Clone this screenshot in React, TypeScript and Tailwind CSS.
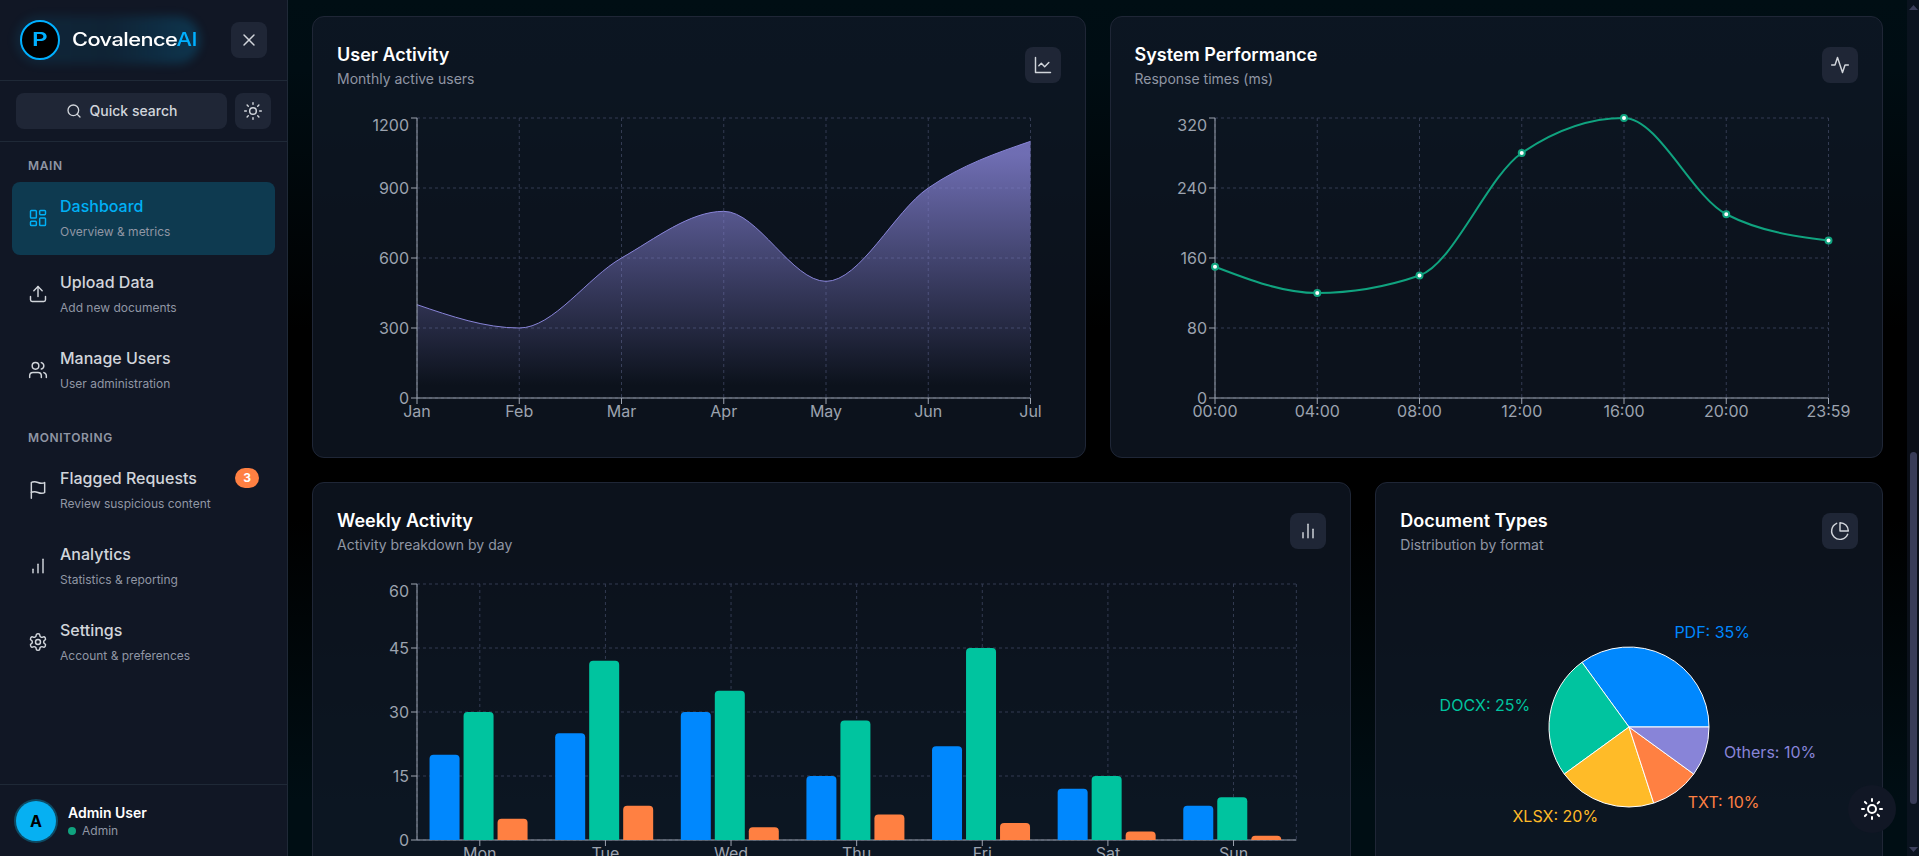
import React from "react";
import { LayoutDashboard, Search, Sun, Upload, Users, X } from "lucide-react";

const COLORS = {
  blue: "#0088fe",
  green: "#00c49f",
  yellow: "#ffbb28",
  orange: "#ff8042",
  purple: "#8884d8",
};

const activityData = [
  { name: "Jan", value: 400 },
  { name: "Feb", value: 300 },
  { name: "Mar", value: 600 },
  { name: "Apr", value: 800 },
  { name: "May", value: 500 },
  { name: "Jun", value: 900 },
  { name: "Jul", value: 1100 },
];

const performanceData = [
  { name: "00:00", value: 150 },
  { name: "04:00", value: 120 },
  { name: "08:00", value: 140 },
  { name: "12:00", value: 280 },
  { name: "16:00", value: 320 },
  { name: "20:00", value: 210 },
  { name: "23:59", value: 180 },
];

const weeklyData = [
  { name: "Mon", values: [20, 30, 5] },
  { name: "Tue", values: [25, 42, 8] },
  { name: "Wed", values: [30, 35, 3] },
  { name: "Thu", values: [15, 28, 6] },
  { name: "Fri", values: [22, 45, 4] },
  { name: "Sat", values: [12, 15, 2] },
  { name: "Sun", values: [8, 10, 1] },
];

const documentTypes = [
  { name: "PDF", value: 35, color: COLORS.blue },
  { name: "DOCX", value: 25, color: COLORS.green },
  { name: "XLSX", value: 20, color: COLORS.yellow },
  { name: "TXT", value: 10, color: COLORS.orange },
  { name: "Others", value: 10, color: COLORS.purple },
];

type Point = { x: number; y: number };

// Chart area margins: y axis takes 60px plus a 20px margin
const LEFT = 80;
const TOP = 5;
const RIGHT = 30;

/* ---------- icons ---------- */

const Icon = ({
  children,
  size = 20,
}: {
  children: React.ReactNode;
  size?: number;
}) => (
  <svg
    width={size}
    height={size}
    viewBox="0 0 24 24"
    fill="none"
    stroke="currentColor"
    strokeWidth={1.75}
    strokeLinecap="round"
    strokeLinejoin="round"
  >
    {children}
  </svg>
);

const FlagIcon = () => (
  <Icon>
    <path d="M4 15s1-1 4-1 5 2 8 2 4-1 4-1V3s-1 1-4 1-5-2-8-2-4 1-4 1z" />
    <path d="M4 22v-7" />
  </Icon>
);

const BarsIcon = () => (
  <Icon>
    <path d="M12 20V10" />
    <path d="M18 20V4" />
    <path d="M6 20v-4" />
  </Icon>
);

const SettingsIcon = () => (
  <Icon>
    <path d="M12.22 2h-.44a2 2 0 0 0-2 2v.18a2 2 0 0 1-1 1.73l-.43.25a2 2 0 0 1-2 0l-.15-.08a2 2 0 0 0-2.73.73l-.22.38a2 2 0 0 0 .73 2.73l.15.1a2 2 0 0 1 1 1.72v.51a2 2 0 0 1-1 1.74l-.15.09a2 2 0 0 0-.73 2.73l.22.38a2 2 0 0 0 2.73.73l.15-.08a2 2 0 0 1 2 0l.43.25a2 2 0 0 1 1 1.73V20a2 2 0 0 0 2 2h.44a2 2 0 0 0 2-2v-.18a2 2 0 0 1 1-1.73l.43-.25a2 2 0 0 1 2 0l.15.08a2 2 0 0 0 2.73-.73l.22-.39a2 2 0 0 0-.73-2.73l-.15-.08a2 2 0 0 1-1-1.74v-.5a2 2 0 0 1 1-1.74l.15-.09a2 2 0 0 0 .73-2.73l-.22-.38a2 2 0 0 0-2.73-.73l-.15.08a2 2 0 0 1-2 0l-.43-.25a2 2 0 0 1-1-1.73V4a2 2 0 0 0-2-2z" />
    <circle cx="12" cy="12" r="3" />
  </Icon>
);

const LineChartIcon = () => (
  <Icon>
    <path d="M3 3v18h18" />
    <path d="m19 9-5 5-4-4-3 3" />
  </Icon>
);

const ActivityIcon = () => (
  <Icon>
    <path d="M22 12h-4l-3 9L9 3l-3 9H2" />
  </Icon>
);

const BarChartIcon = () => (
  <Icon>
    <path d="M18 20V10" />
    <path d="M12 20V4" />
    <path d="M6 20v-6" />
  </Icon>
);

const PieChartIcon = () => (
  <Icon>
    <path d="M21.21 15.89A10 10 0 1 1 8 2.83" />
    <path d="M22 12A10 10 0 0 0 12 2v10z" />
  </Icon>
);

/* ---------- sidebar ---------- */

type NavItemProps = {
  icon: React.ReactNode;
  title: string;
  description: string;
  active?: boolean;
  badge?: number;
};

const NavItem = ({ icon, title, description, active, badge }: NavItemProps) => {
  return (
    <a
      className={
        active
          ? "-mb-px flex h-[73px] items-center gap-3 rounded-lg bg-[#0e3a50] px-4 pb-px text-[#00b0f5]"
          : "flex h-[72px] items-center gap-3 rounded-lg px-4 text-[#d1d5db]"
      }
    >
      {icon}
      <div className="flex-1">
        <div className="flex items-center justify-between">
          <span className="text-base leading-6 font-medium">{title}</span>
          {badge && (
            <span className="flex h-5 w-6 items-center justify-center rounded-full bg-[#ff8042] text-xs font-bold text-white">
              {badge}
            </span>
          )}
        </div>
        <p className="mt-1 text-xs leading-5 text-[#9096a4]">{description}</p>
      </div>
    </a>
  );
};

const NavSection = ({
  label,
  children,
}: {
  label: string;
  children: React.ReactNode;
}) => (
  <div>
    <h3 className="mb-2 px-4 text-xs leading-4 font-semibold tracking-wider text-[#9096a4] uppercase">
      {label}
    </h3>
    <div className="flex flex-col gap-1">{children}</div>
  </div>
);

const Sidebar = () => {
  return (
    <aside className="flex h-[857px] w-72 shrink-0 flex-col border-r border-[#1f2937] bg-[#111725]">
      <div className="flex h-[81px] items-center justify-between border-b border-[#1f2937] px-5">
        <div className="relative flex items-center gap-3">
          <div className="absolute -inset-x-1 -inset-y-1 rounded-full bg-linear-to-r from-[#00b0f5]/10 via-[#00b0f5]/8 to-[#00b0f5]/20 blur-[5px]" />
          <div className="relative flex size-10 items-center justify-center rounded-full border-2 border-[#00b0ff] bg-black">
            <span className="scale-x-[1.35] text-lg font-semibold text-[#00b0ff]">
              P
            </span>
          </div>
          <div className="relative w-[124px]">
            <span className="inline-block origin-left scale-x-[1.21] text-lg font-medium tracking-tight text-white">
              Covalence<span className="text-[#00b0ff]">AI</span>
            </span>
          </div>
        </div>
        <button className="flex size-9 items-center justify-center rounded-lg bg-[#1f2636] text-[#d1d5db]">
          <X size={20} strokeWidth={1.75} />
        </button>
      </div>

      <div className="flex gap-2 border-b border-[#1f2937] px-4 py-3">
        <button className="flex h-9 flex-1 items-center justify-center gap-2 rounded-lg bg-[#1f2636] text-sm font-medium text-[#d1d5db]">
          <Search size={16} />
          Quick search
        </button>
        <button className="flex size-9 items-center justify-center rounded-lg bg-[#1f2636] text-[#d1d5db]">
          <Sun size={20} strokeWidth={1.75} />
        </button>
      </div>

      <nav className="flex flex-1 flex-col gap-6 px-3 py-4">
        <NavSection label="Main">
          <NavItem
            icon={<LayoutDashboard size={20} strokeWidth={1.75} />}
            title="Dashboard"
            description="Overview & metrics"
            active
          />
          <NavItem
            icon={<Upload size={20} strokeWidth={1.75} />}
            title="Upload Data"
            description="Add new documents"
          />
          <NavItem
            icon={<Users size={20} strokeWidth={1.75} />}
            title="Manage Users"
            description="User administration"
          />
        </NavSection>
        <NavSection label="Monitoring">
          <NavItem
            icon={<FlagIcon />}
            title="Flagged Requests"
            description="Review suspicious content"
            badge={3}
          />
          <NavItem
            icon={<BarsIcon />}
            title="Analytics"
            description="Statistics & reporting"
          />
          <NavItem
            icon={<SettingsIcon />}
            title="Settings"
            description="Account & preferences"
          />
        </NavSection>
      </nav>

      <div className="flex items-center gap-3 border-t border-[#1f2937] p-4">
        <div className="flex size-10 items-center justify-center rounded-full bg-[#06b0f2] font-bold text-black ring-2 ring-[#0e4a63]">
          A
        </div>
        <div>
          <p className="text-sm leading-5 font-semibold text-white">
            Admin User
          </p>
          <p className="flex items-center gap-1.5 text-xs leading-4 text-[#9096a4]">
            <span className="size-2 rounded-full bg-[#10a37f]" />
            Admin
          </p>
        </div>
      </div>
    </aside>
  );
};

/* ---------- charts ---------- */

const sign = (n: number) => (n < 0 ? -1 : 1);

// Monotone cubic interpolation through the given points
const monotonePath = (pts: Point[]) => {
  const n = pts.length;
  const slope = (a: Point, b: Point) => (b.y - a.y) / (b.x - a.x);
  const t = pts.map((p, i) => {
    if (i === 0 || i === n - 1) return 0;
    const s0 = slope(pts[i - 1], p);
    const s1 = slope(p, pts[i + 1]);
    const avg = (s0 + s1) / 2;
    return (
      (sign(s0) + sign(s1)) *
        Math.min(Math.abs(s0), Math.abs(s1), 0.5 * Math.abs(avg)) || 0
    );
  });
  t[0] = (3 * slope(pts[0], pts[1]) - t[1]) / 2;
  t[n - 1] = (3 * slope(pts[n - 2], pts[n - 1]) - t[n - 2]) / 2;

  let d = `M${pts[0].x},${pts[0].y}`;
  for (let i = 1; i < n; i++) {
    const a = pts[i - 1];
    const b = pts[i];
    const dx = (b.x - a.x) / 3;
    d += `C${a.x + dx},${a.y + dx * t[i - 1]},${b.x - dx},${b.y - dx * t[i]},${b.x},${b.y}`;
  }
  return d;
};

type AxesProps = {
  width: number;
  bottom: number;
  xs: number[];
  labels: string[];
  yTicks: number[];
};

const Grid = ({ width, bottom, xs, yTicks }: AxesProps) => {
  const right = width - RIGHT;
  const step = (bottom - TOP) / (yTicks.length - 1);
  const verticals = [...new Set([LEFT, ...xs, right])];
  return (
    <g stroke="#333b52" strokeDasharray="3 3">
      {yTicks.map((tick, i) => (
        <line
          key={tick}
          x1={LEFT}
          x2={right}
          y1={bottom - i * step}
          y2={bottom - i * step}
        />
      ))}
      {verticals.map((x) => (
        <line key={x} x1={x} x2={x} y1={TOP} y2={bottom} />
      ))}
    </g>
  );
};

const Axes = ({ width, bottom, xs, labels, yTicks }: AxesProps) => {
  const step = (bottom - TOP) / (yTicks.length - 1);
  return (
    <g>
      <g stroke="#9ca3af">
        <line x1={LEFT} x2={width - RIGHT} y1={bottom} y2={bottom} />
        <line x1={LEFT} x2={LEFT} y1={TOP} y2={bottom} />
        {xs.map((x) => (
          <line key={x} x1={x} x2={x} y1={bottom} y2={bottom + 6} />
        ))}
        {yTicks.map((tick, i) => (
          <line
            key={tick}
            x1={LEFT - 6}
            x2={LEFT}
            y1={bottom - i * step}
            y2={bottom - i * step}
          />
        ))}
      </g>
      <g fill="#9ca3af" fontSize={16}>
        {labels.map((label, i) => (
          <text key={label} x={xs[i]} y={bottom + 19} textAnchor="middle">
            {label}
          </text>
        ))}
        {yTicks.map((tick, i) => (
          <text
            key={tick}
            x={LEFT - 8}
            y={bottom - i * step + (i === yTicks.length - 1 ? 13 : 5.5)}
            textAnchor="end"
          >
            {tick}
          </text>
        ))}
      </g>
    </g>
  );
};

const UserActivityChart = () => {
  const width = 723.5;
  const bottom = 285;
  const step = (width - LEFT - RIGHT) / 6;
  const pts = activityData.map((d, i) => ({
    x: LEFT + i * step,
    y: bottom - (d.value / 1200) * 280,
  }));
  const line = monotonePath(pts);
  const axes = {
    width,
    bottom,
    xs: pts.map((p) => p.x),
    labels: activityData.map((d) => d.name),
    yTicks: [0, 300, 600, 900, 1200],
  };
  return (
    <svg className="block" width={width} height={320}>
      <defs>
        <linearGradient id="colorUsers" x1="0" y1="0" x2="0" y2="1">
          <stop offset="5%" stopColor={COLORS.purple} stopOpacity={0.8} />
          <stop offset="95%" stopColor={COLORS.purple} stopOpacity={0} />
        </linearGradient>
      </defs>
      <Grid {...axes} />
      <path
        d={`${line}L${width - RIGHT},${bottom}L${LEFT},${bottom}Z`}
        fill="url(#colorUsers)"
      />
      <path d={line} fill="none" stroke={COLORS.purple} />
      <Axes {...axes} />
    </svg>
  );
};

const PerformanceChart = () => {
  const width = 723.5;
  const bottom = 285;
  const step = (width - LEFT - RIGHT) / 6;
  const pts = performanceData.map((d, i) => ({
    x: LEFT + i * step,
    y: bottom - (d.value / 320) * 280,
  }));
  const axes = {
    width,
    bottom,
    xs: pts.map((p) => p.x),
    labels: performanceData.map((d) => d.name),
    yTicks: [0, 80, 160, 240, 320],
  };
  return (
    <svg className="-mt-[0.5px] block" width={width} height={320}>
      <Grid {...axes} />
      <Axes {...axes} />
      <path d={monotonePath(pts)} fill="none" stroke="#10a37f" strokeWidth={2} />
      {pts.map((p) => (
        <circle
          key={p.x}
          cx={p.x}
          cy={p.y}
          r={3}
          fill="#fff"
          stroke="#10a37f"
          strokeWidth={2}
        />
      ))}
    </svg>
  );
};

const WeeklyChart = () => {
  const width = 989.33;
  const bottom = 261;
  const band = (width - LEFT - RIGHT) / weeklyData.length;
  const fills = [COLORS.blue, COLORS.green, COLORS.orange];
  const axes = {
    width,
    bottom,
    xs: weeklyData.map((_, i) => LEFT + band * (i + 0.5)),
    labels: weeklyData.map((d) => d.name),
    yTicks: [0, 15, 30, 45, 60],
  };
  return (
    <svg className="block" width={width} height={320}>
      <Grid {...axes} />
      <Axes {...axes} />
      {weeklyData.map((day, i) =>
        day.values.map((value, j) => {
          const x = LEFT + band * (i + 0.1) + j * 34;
          const h = (value / 60) * 256;
          const r = Math.min(4, h);
          return (
            <path
              key={`${day.name}-${j}`}
              fill={fills[j]}
              d={`M${x},${bottom}v${-(h - r)}a${r},${r} 0 0 1 ${r},${-r}h${30 - 2 * r}a${r},${r} 0 0 1 ${r},${r}v${h - r}z`}
            />
          );
        }),
      )}
    </svg>
  );
};

const DocumentTypesChart = () => {
  const cx = 229;
  const cy = 148;
  const at = (deg: number, radius: number) => ({
    x: cx + radius * Math.cos((deg * Math.PI) / 180),
    y: cy - radius * Math.sin((deg * Math.PI) / 180),
  });
  let start = 0;
  const slices = documentTypes.map((type) => {
    const end = start + type.value * 3.6;
    const slice = {
      ...type,
      from: at(start, 80),
      to: at(end, 80),
      label: at((start + end) / 2, 100),
    };
    start = end;
    return slice;
  });
  return (
    <svg className="block" width={457.67} height={320}>
      {slices.map((s) => (
        <path
          key={s.name}
          d={`M${cx},${cy}L${s.from.x},${s.from.y}A80,80 0 0 0 ${s.to.x},${s.to.y}Z`}
          fill={s.color}
          stroke="#fff"
          strokeLinejoin="round"
        />
      ))}
      {slices.map((s) => (
        <text
          key={s.name}
          x={s.label.x}
          y={s.label.y}
          fontSize={16}
          fill={s.color}
          textAnchor={s.label.x > cx ? "start" : "end"}
        >
          {`${s.name}: ${s.value}%`}
        </text>
      ))}
    </svg>
  );
};

/* ---------- page ---------- */

type ChartCardProps = {
  title: string;
  subtitle: string;
  icon: React.ReactNode;
  className?: string;
  children: React.ReactNode;
};

const ChartCard = ({
  title,
  subtitle,
  icon,
  className = "",
  children,
}: ChartCardProps) => (
  <section
    className={`h-[442px] rounded-xl border border-[#1f2636] bg-[#111a28]/70 p-6 ${className}`}
  >
    <div className="mb-6 flex items-center justify-between">
      <div>
        <h3 className="text-lg leading-7 font-semibold text-white">{title}</h3>
        <p className="text-sm leading-5 text-[#9096a4]">{subtitle}</p>
      </div>
      <button className="flex size-9 items-center justify-center rounded-lg bg-[#1f2636] text-[#d1d5db]">
        {icon}
      </button>
    </div>
    {children}
  </section>
);

const Scrollbar = () => (
  <div className="flex w-3 shrink-0 flex-col items-center bg-[#111827]/60">
    <svg width="12" height="12" viewBox="0 0 12 12" fill="#3b3f5c">
      <path d="M2 10l4.5-5 4.5 5z" />
    </svg>
    <div className="mt-[440px] h-[352px] w-[7px] rounded-full bg-[#383c58]" />
    <svg
      className="mt-[42px]"
      width="12"
      height="10"
      viewBox="0 0 12 10"
      fill="#3b3f5c"
    >
      <path d="M2 1l4.5 5 4.5-5z" />
    </svg>
  </div>
);

export default function App() {
  return (
    <div className="relative flex h-[856px] overflow-hidden bg-[linear-gradient(180deg,#000e14_0px,#000d13_70px,#000_330px,#000_520px,#000e14_800px,#000e14_856px)] font-['Inter',sans-serif]">
      <Sidebar />
      <main className="flex-1 overflow-hidden px-6 pt-4">
        <div className="grid grid-cols-2 gap-6">
          <ChartCard
            title="User Activity"
            subtitle="Monthly active users"
            icon={<LineChartIcon />}
          >
            <UserActivityChart />
          </ChartCard>
          <ChartCard
            title="System Performance"
            subtitle="Response times (ms)"
            icon={<ActivityIcon />}
          >
            <PerformanceChart />
          </ChartCard>
        </div>
        <div className="mt-6 grid grid-cols-3 gap-6">
          <ChartCard
            title="Weekly Activity"
            subtitle="Activity breakdown by day"
            icon={<BarChartIcon />}
            className="col-span-2"
          >
            <WeeklyChart />
          </ChartCard>
          <ChartCard
            title="Document Types"
            subtitle="Distribution by format"
            icon={<PieChartIcon />}
          >
            <DocumentTypesChart />
          </ChartCard>
        </div>
      </main>
      <Scrollbar />
      <button className="absolute right-[23px] bottom-[23px] flex size-12 items-center justify-center rounded-full bg-[#111725] text-white">
        <Sun size={24} />
      </button>
    </div>
  );
}
